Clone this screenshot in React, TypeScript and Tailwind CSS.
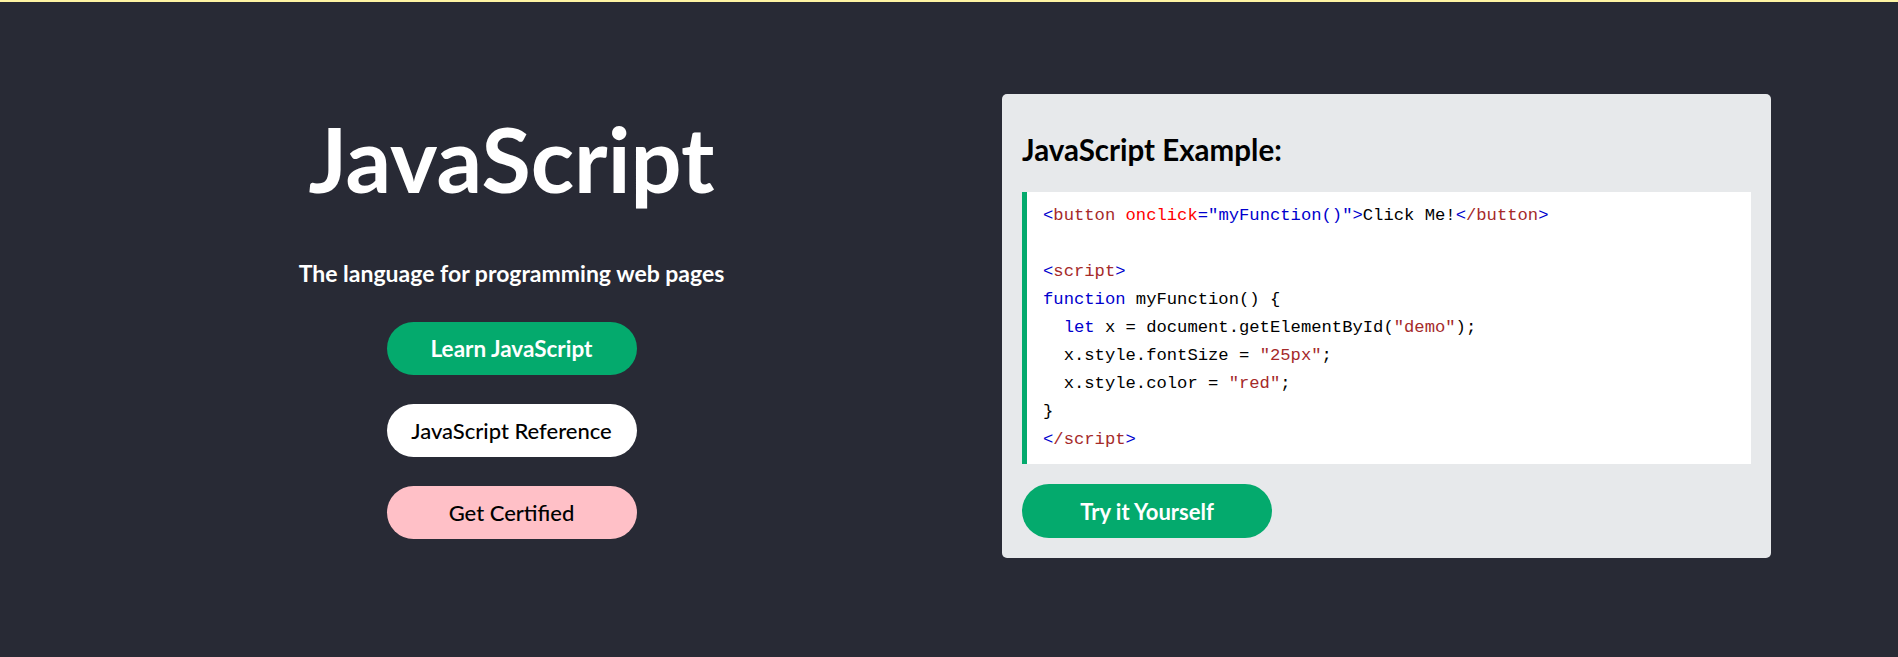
import React from 'react';

const Tag: React.FC<{ children: React.ReactNode }> = ({ children }) => (
  <span className="text-[#a52a2a]">{children}</span>
);
const B: React.FC<{ children: React.ReactNode }> = ({ children }) => (
  <span className="text-[#0000cd]">{children}</span>
);
const Str: React.FC<{ children: React.ReactNode }> = ({ children }) => (
  <span className="text-[#a52a2a]">{children}</span>
);

const CodeExample: React.FC = () => {
  // colored lines, like the w3schools highlighter
  return (
    <div className="mt-[24px] bg-white border-l-[5px] border-[#04aa6d] pl-[16px] py-[10px] font-['Liberation_Mono',monospace] text-[17.2px] leading-[28px] text-black whitespace-pre">
      <div>
        <B>&lt;</B><Tag>button</Tag> <span className="text-[#ff0000]">onclick</span>
        <B>="myFunction()"</B><B>&gt;</B>Click Me!<B>&lt;</B><Tag>/button</Tag><B>&gt;</B>
      </div>
      <div>&nbsp;</div>
      <div>
        <B>&lt;</B><Tag>script</Tag><B>&gt;</B>
      </div>
      <div>
        <B>function</B> myFunction() {'{'}
      </div>
      <div>
        {'  '}<B>let</B> x = document.getElementById(<Str>"demo"</Str>);
      </div>
      <div>
        {'  '}x.style.fontSize = <Str>"25px"</Str>;
      </div>
      <div>
        {'  '}x.style.color = <Str>"red"</Str>;
      </div>
      <div>{'}'}</div>
      <div>
        <B>&lt;</B><Tag>/script</Tag><B>&gt;</B>
      </div>
    </div>
  );
};

const App: React.FC = () => {
  return (
    <div className="min-h-screen bg-[#282a35] border-t-2 border-[#fff4a3] font-['Lato','Open_Sans',sans-serif]">
      <div className="mx-auto w-[1750px] grid grid-cols-2">
        {/* left: title + links */}
        <div className="flex flex-col items-center pt-[106px] text-white">
          <h1 className="text-[90px] leading-[100px] font-bold">JavaScript</h1>
          <p className="mt-[50px] text-[23px] leading-[30px] font-bold">
            The language for programming web pages
          </p>
          <div className="mt-[34px] flex flex-col gap-[29px]">
            <a className="w-[250px] h-[53px] rounded-full bg-[#04aa6d] text-white text-[22.5px] font-bold flex items-center justify-center">
              Learn JavaScript
            </a>
            <a className="w-[250px] h-[53px] rounded-full bg-white text-black text-[22px] font-medium flex items-center justify-center">
              JavaScript Reference
            </a>
            <a className="w-[250px] h-[53px] rounded-full bg-[#ffc0c7] text-black text-[22px] font-medium flex items-center justify-center">
              Get Certified
            </a>
          </div>
        </div>

        {/* right: example card */}
        <div className="pt-[92px] px-[53px]">
          <div className="bg-[#e7e9eb] rounded-[5px] p-[20px]">
            <h3 className="mt-[18px] text-[29.5px] leading-[36px] font-bold text-black">JavaScript Example:</h3>
            <CodeExample />
            <a className="mt-[20px] w-[250px] h-[54px] rounded-full bg-[#04aa6d] text-white text-[22px] font-bold flex items-center justify-center">
              Try it Yourself
            </a>
          </div>
        </div>
      </div>
    </div>
  );
};

export default App;
